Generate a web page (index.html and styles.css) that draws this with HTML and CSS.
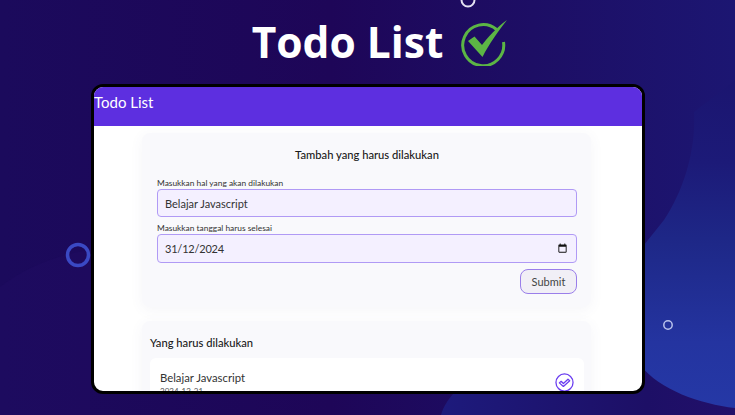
FILE: index.html
```html
<!DOCTYPE html>
<html lang="en">
<head>
    <meta charset="UTF-8">
    <meta name="viewport" content="width=device-width, initial-scale=1.0">
    <title>Todo List</title>
    <link rel="stylesheet" href="styles.css">
</head>
<body>
    <svg class="backdrop" viewBox="0 0 735 415" aria-hidden="true">
        <defs>
            <linearGradient id="bgFill" x1="0" y1="0" x2="1" y2="0">
                <stop offset="0" stop-color="#1b0a5c"/>
                <stop offset="0.45" stop-color="#1e0658"/>
                <stop offset="1" stop-color="#1c1672"/>
            </linearGradient>
            <linearGradient id="blobFill" x1="0" y1="0" x2="0" y2="1">
                <stop offset="0" stop-color="#1b1570"/>
                <stop offset="0.25" stop-color="#1c1a78"/>
                <stop offset="0.5" stop-color="#1e2888"/>
                <stop offset="0.8" stop-color="#2434a0"/>
                <stop offset="1" stop-color="#2538a6"/>
            </linearGradient>
            <linearGradient id="lowFill" x1="0" y1="0" x2="1" y2="0">
                <stop offset="0" stop-color="#1d1a7c"/>
                <stop offset="0.7" stop-color="#1d0f66"/>
                <stop offset="1" stop-color="#22106a"/>
            </linearGradient>
        </defs>
        <rect width="735" height="415" fill="url(#bgFill)"/>
        <path d="M441 415 C445 398 470 370 520 350 L735 340 V415 Z" fill="url(#lowFill)"/>
        <path d="M664 220 C684 190 696 150 694 112 C715 96 725 88 735 80 V408 C700 404 660 390 640 365 L600 300 Z" fill="url(#blobFill)"/>
        <path d="M0 287 C25 268 55 255 90 250 L90 415 H0 Z" fill="#1f0c62" opacity="0.5"/>
        <circle cx="468" cy="0" r="6.5" fill="none" stroke="#e4e2f2" stroke-width="2"/>
        <circle cx="78" cy="255" r="10.5" fill="none" stroke="#3a49c4" stroke-width="3.5"/>
        <circle cx="668" cy="325" r="4.2" fill="none" stroke="#b9c2ec" stroke-width="1.5"/>
    </svg>

    <h1 class="poster-title">
        Todo List
        <svg class="poster-check" viewBox="0 0 48 48" aria-hidden="true">
            <path d="M36.5 11.5 A20.5 20.5 0 1 0 43.5 24" fill="none" stroke="#5cb545" stroke-width="3"/>
            <path d="M8 23 L14.5 18.5 L22 27 C28 19 37 9 47 2 C39 12 29 26 22.500 39 Z" fill="#5cb545"/>
        </svg>
    </h1>

    <div class="frame">
        <header class="app-bar">Todo List</header>
        <main class="app-body">
            <section class="card form-card">
                <h2 class="form-title">Tambah yang harus dilakukan</h2>
                <label class="field-label" for="todoName">Masukkan hal yang akan dilakukan</label>
                <input class="field" id="todoName" type="text" value="Belajar Javascript">
                <label class="field-label" for="todoDate">Masukkan tanggal harus selesai</label>
                <div class="date-wrap">
                    <input class="field date-field" id="todoDate" type="text" value="31/12/2024">
                    <svg class="date-icon" viewBox="0 0 24 24" aria-hidden="true">
                        <path d="M19 3h-1V1h-2v2H8V1H6v2H5c-1.100 0-2 .9-2 2v14c0 1.100.9 2 2 2h14c1.100 0 2-.9 2-2V5c0-1.100-.9-2-2-2zm0 16H5V8h14v11z" fill="#111"/>
                    </svg>
                </div>
                <div class="form-actions">
                    <button class="submit-btn" type="button">Submit</button>
                </div>
            </section>

            <section class="card list-card">
                <h3 class="list-title">Yang harus dilakukan</h3>
                <div class="todo-item">
                    <div>
                        <p class="todo-name">Belajar Javascript</p>
                        <p class="todo-date">2024-12-31</p>
                    </div>
                    <svg class="todo-check" viewBox="0 0 24 24" aria-hidden="true">
                        <circle cx="12" cy="12" r="10.800" fill="none" stroke="#6a3df0" stroke-width="1.600"/>
                        <path d="M5.500 12.500 L7.800 10.500 L10.600 13.300 L16.400 7.800 L18.600 9.800 L10.600 17 Z" fill="none" stroke="#6a3df0" stroke-width="1.600" stroke-linejoin="round"/>
                    </svg>
                </div>
            </section>
        </main>
    </div>
</body>
</html>
```

FILE: styles.css
```css
body {
    margin: 0;
    height: 415px;
    overflow: hidden;
    position: relative;
    background-color: #1b0a5c;
    font-family: "Lato", "Open Sans", sans-serif;
    color: #222;
}
.backdrop {
    position: absolute;
    left: 0;
    top: 0;
    width: 735px;
    height: 415px;
}
.poster-title {
    position: relative;
    display: flex;
    justify-content: center;
    align-items: center;
    gap: 17px;
    height: 84px;
    margin: 0;
    box-sizing: border-box;
    padding-left: 25px;
    padding-bottom: 1px;
    font-family: "Open Sans", sans-serif;
    font-size: 42.500px;
    font-weight: 700;
    color: #fff;
}
.poster-check {
    width: 48px;
    height: 48px;
}
.frame {
    position: relative;
    box-sizing: border-box;
    width: 554px;
    height: 310px;
    margin-left: 91px;
    border: 3px solid #000;
    border-radius: 12px;
    overflow: hidden;
    background-color: #fff;
}
.app-bar {
    height: 39px;
    line-height: 30px;
    background-color: #5d2fe0;
    color: #fff;
    font-size: 15px;
}
.app-body {
    padding: 7px 51px 0 48px;
}
.card {
    background-color: #f9f9fc;
    border-radius: 8px;
    box-shadow: 0 3px 14px rgba(90, 90, 140, 0.06);
}
.form-card {
    box-sizing: border-box;
    height: 174px;
    padding: 15px 14px 0 15px;
}
.form-title {
    margin: 0 0 16px;
    font-size: 11.200px;
    font-weight: 500;
    line-height: 14px;
    text-align: center;
    color: #1a1a1a;
}
.field-label {
    display: block;
    font-size: 8.400px;
    line-height: 10px;
    color: #333;
    margin-bottom: 1px;
}
.field {
    display: block;
    box-sizing: border-box;
    width: 100%;
    height: 28px;
    padding: 0 7px;
    margin-bottom: 6px;
    background-color: #f4f0ff;
    border: 1.500px solid #b09af5;
    border-radius: 4px;
    font-family: inherit;
    font-size: 11px;
    color: #333;
}
.date-wrap {
    position: relative;
}
.date-field {
    height: 29px;
    letter-spacing: -0.2px;
}
.date-icon {
    position: absolute;
    right: 9px;
    top: 9px;
    width: 11px;
    height: 11px;
}
.form-actions {
    display: flex;
    justify-content: flex-end;
}
.submit-btn {
    width: 57px;
    height: 25px;
    padding: 0;
    background-color: #f1eff6;
    border: 1.500px solid #9a7eea;
    border-radius: 8px;
    font-family: inherit;
    font-size: 11px;
    color: #444;
}
.list-card {
    height: 200px;
    margin-top: 14px;
    padding: 15px 7px 0 8px;
}
.list-title {
    margin: 0 0 8px;
    font-size: 11.200px;
    font-weight: 500;
    line-height: 14px;
    color: #1a1a1a;
}
.todo-item {
    display: flex;
    justify-content: space-between;
    padding: 13px 10px;
    background-color: #fff;
    border-radius: 6px;
}
.todo-name {
    margin: 0 0 1px;
    font-size: 11.300px;
    line-height: 14px;
    color: #333;
}
.todo-date {
    margin: 0;
    font-size: 8px;
    line-height: 10px;
    color: #555;
}
.todo-check {
    width: 19px;
    height: 19px;
    margin-top: 2px;
}
```
